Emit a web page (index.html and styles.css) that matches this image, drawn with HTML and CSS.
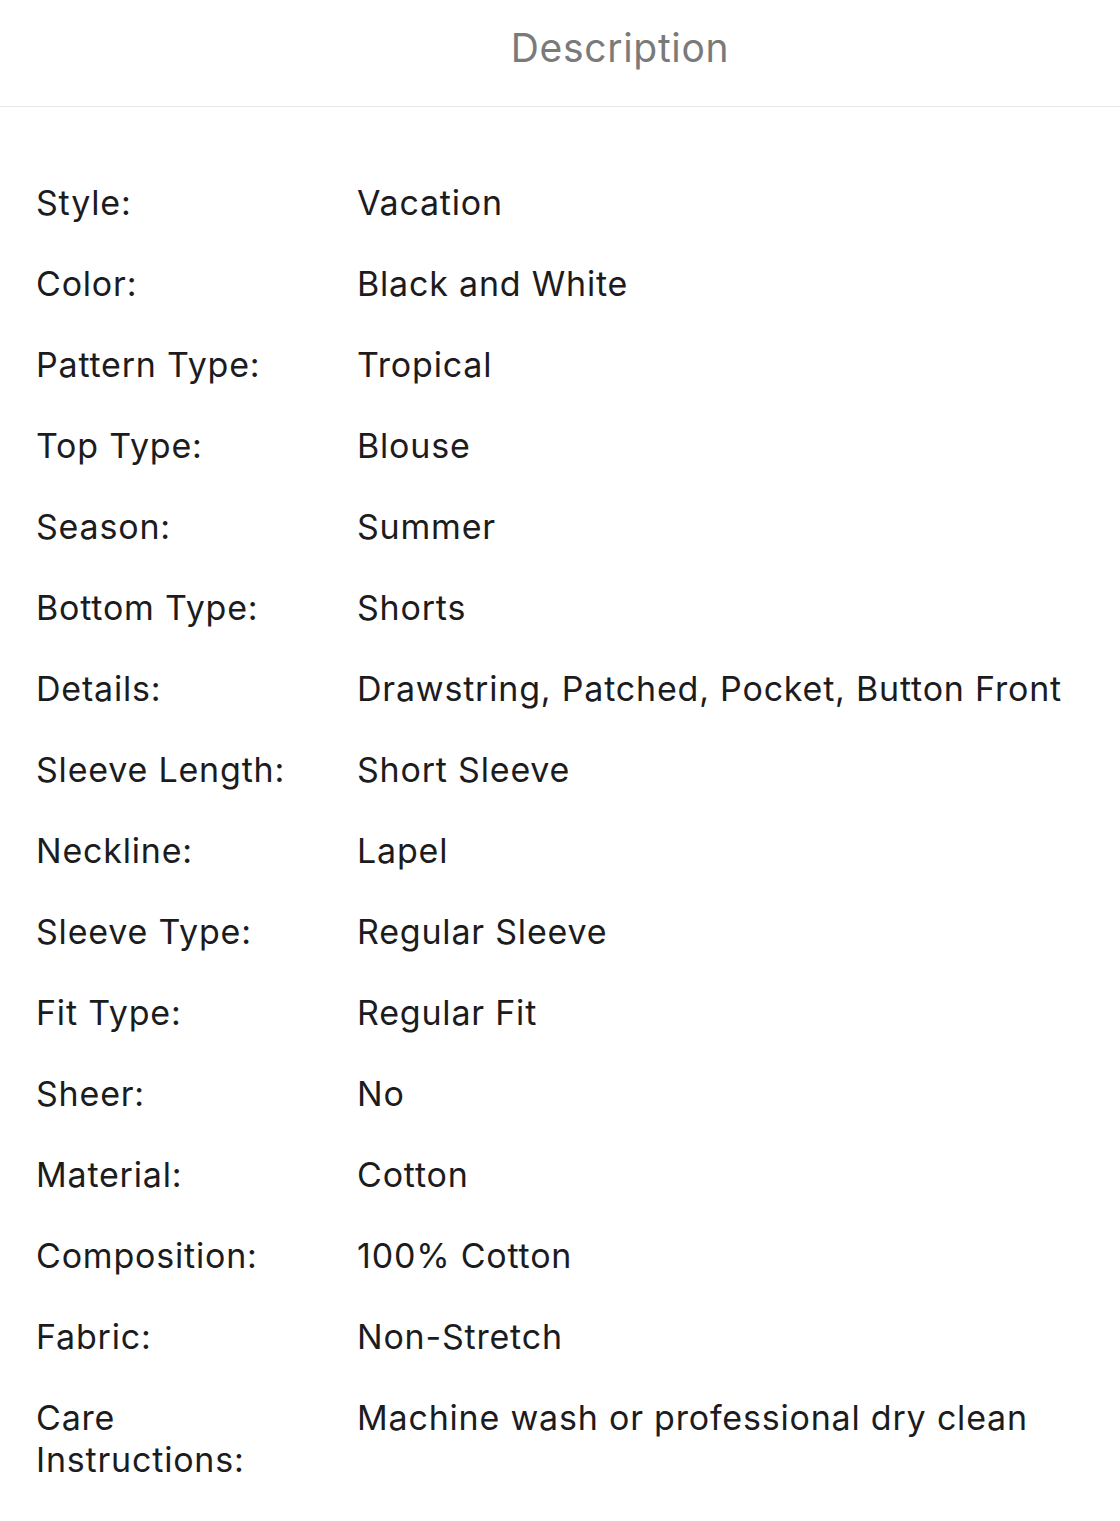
FILE: index.html
```html
<!DOCTYPE html>
<html>
<head>
<meta charset="utf-8">
<link rel="stylesheet" href="styles.css">
</head>
<body>
<header class="top">
  <h1 class="title">Description</h1>
</header>
<main class="spec">
  <div class="row"><div class="label">Style:</div><div class="value">Vacation</div></div>
  <div class="row"><div class="label">Color:</div><div class="value">Black and White</div></div>
  <div class="row"><div class="label">Pattern Type:</div><div class="value">Tropical</div></div>
  <div class="row"><div class="label">Top Type:</div><div class="value">Blouse</div></div>
  <div class="row"><div class="label">Season:</div><div class="value">Summer</div></div>
  <div class="row"><div class="label">Bottom Type:</div><div class="value">Shorts</div></div>
  <div class="row"><div class="label">Details:</div><div class="value">Drawstring, Patched, Pocket, Button Front</div></div>
  <div class="row"><div class="label">Sleeve Length:</div><div class="value">Short Sleeve</div></div>
  <div class="row"><div class="label">Neckline:</div><div class="value">Lapel</div></div>
  <div class="row"><div class="label">Sleeve Type:</div><div class="value">Regular Sleeve</div></div>
  <div class="row"><div class="label">Fit Type:</div><div class="value">Regular Fit</div></div>
  <div class="row"><div class="label">Sheer:</div><div class="value">No</div></div>
  <div class="row"><div class="label">Material:</div><div class="value">Cotton</div></div>
  <div class="row"><div class="label">Composition:</div><div class="value">100% Cotton</div></div>
  <div class="row"><div class="label">Fabric:</div><div class="value">Non-Stretch</div></div>
  <div class="row"><div class="label">Care Instructions:</div><div class="value">Machine wash or professional dry clean</div></div>
</main>
</body>
</html>
```
FILE: styles.css
```css
html, body {
  margin: 0;
  padding: 0;
  background: #ffffff;
}
body {
  font-family: Inter, "Noto Sans", sans-serif;
  color: #1c1c1e;
}
.top {
  height: 106px;
  border-bottom: 1px solid #e6e6e6;
  display: flex;
  align-items: center;
  justify-content: center;
  padding-left: 120px;
  box-sizing: content-box;
}
.title {
  margin: 0;
  font-size: 39px;
  font-weight: 400;
  color: #7a7a7a;
  line-height: 1;
  letter-spacing: 0.7px;
  padding-bottom: 12px;
}
.spec {
  padding: 75px 20px 0 36px;
  display: flex;
  flex-direction: column;
  gap: 39px;
}
.row {
  display: grid;
  grid-template-columns: 321px 1fr;
  font-size: 34px;
  line-height: 42px;
  letter-spacing: 0.8px;
}
.label {
  padding-right: 60px;
}
```
